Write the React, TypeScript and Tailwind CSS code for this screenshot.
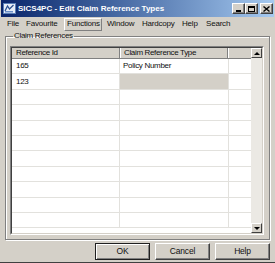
import React from 'react';

const font = { fontFamily: '"Liberation Sans", Arial, sans-serif' };

const menus = [
  { label: 'File', w: 'w-[19px]' },
  { label: 'Favourite', w: 'w-[41px]' },
  { label: 'Functions', w: 'w-[38px] mr-[2px]' },
  { label: 'Window', w: 'w-[35px]' },
  { label: 'Hardcopy', w: 'w-[40px]' },
  { label: 'Help', w: 'w-[24px]' },
  { label: 'Search', w: 'w-[40px]' },
];

const rows = [
  { id: '165', type: 'Policy Number', sel: false },
  { id: '123', type: '', sel: true },
  ...Array.from({ length: 9 }, () => ({ id: '', type: '', sel: false })),
];

function CaptionButton({ children }: { children: React.ReactNode }) {
  return (
    <div className="w-[13px] h-[11px] bg-[#d4d0c8] border border-t-white border-l-white border-r-[#404040] border-b-[#404040] shadow-[inset_-1px_-1px_0_#808080] flex items-center justify-center">
      {children}
    </div>
  );
}

function Btn({ label, def }: { label: string; def?: boolean }) {
  return (
    <div
      className={
        'w-[55px] h-[17px] flex items-center justify-center text-[8.5px] tracking-[-0.2px] text-[#111] bg-[#d4d0c8] border ' +
        (def
          ? 'border-[#202020] shadow-[inset_1px_1px_0_#fff,inset_-1px_-1px_0_#808080]'
          : 'border-t-white border-l-white border-r-[#404040] border-b-[#404040] shadow-[inset_-1px_-1px_0_#808080]')
      }
    >
      {label}
    </div>
  );
}

export default function App() {
  return (
    <div style={font} className="w-[275px] h-[263px] bg-[#d4d0c8] flex flex-col border-b border-b-[#404040] overflow-hidden select-none">
      {/* title bar */}
      <div className="h-[17px] mx-[1px] flex items-center bg-gradient-to-r from-[#0a246a] to-[#a6caf0]">
        <svg width="13" height="13" viewBox="0 0 13 13" className="ml-[2px]">
          <rect x="0.5" y="1.5" width="12" height="10" fill="#e8eef8" stroke="#5a7fb8" />
          <path d="M2 9 L4.5 4 L6.5 7 L10.5 3" stroke="#2b4f8f" strokeWidth="1.3" fill="none" />
          <rect x="2" y="9" width="8" height="1.5" fill="#6a8fc8" />
        </svg>
        <span className="ml-[2px] text-white font-bold text-[8px] leading-none whitespace-nowrap">
          SICS4PC - Edit Claim Reference Types
        </span>
        <div className="ml-auto flex items-center mr-[1px]">
          <CaptionButton>
            <div className="w-[5px] h-[2px] bg-black mt-[4px] mr-[1px]" />
          </CaptionButton>
          <CaptionButton>
            <div className="w-[7px] h-[6px] border border-black border-t-2" />
          </CaptionButton>
          <div className="w-[2px]" />
          <CaptionButton>
            <svg width="7" height="6" viewBox="0 0 7 6">
              <path d="M0.5 0.5 L6.5 5.5 M6.5 0.5 L0.5 5.5" stroke="#000" strokeWidth="1.4" />
            </svg>
          </CaptionButton>
        </div>
      </div>

      {/* menu bar */}
      <div className="h-[14px] flex items-center text-[8px] tracking-[-0.2px] text-[#111] pl-[4px]">
        {menus.map((m) => (
          <div
            key={m.label}
            className={
              'h-[13px] flex items-center pl-[2px] whitespace-nowrap border ' +
              m.w +
              ' ' +
              (m.label === 'Functions' ? 'border-t-white border-l-white border-r-[#808080] border-b-[#808080]' : 'border-transparent')
            }
          >
            {m.label}
          </div>
        ))}
      </div>

      {/* group box */}
      <fieldset className="mx-[5px] h-[209px] border border-[#808080] shadow-[1px_1px_0_#fff,inset_1px_1px_0_#fff] pl-[4px] pr-[5px] pb-[4px]">
        <legend className="ml-[3px] px-[1px] text-[8px] tracking-[-0.3px] leading-[10px] text-[#111]">Claim References</legend>
        <div className="mt-[5px] h-[189px] border border-t-[#808080] border-l-[#808080] border-r-white border-b-white">
          <div className="h-full border border-t-[#404040] border-l-[#404040] border-r-[#d4d0c8] border-b-[#d4d0c8] flex bg-white">
            <div className="flex-1 flex flex-col">
              {/* header */}
              <div className="h-[11px] flex text-[8px] tracking-[-0.35px] leading-[10px] text-[#111] bg-[#d4d0c8] border-b border-b-[#808080]">
                <div className="w-[108px] pl-[4px] border-r border-r-[#808080]">Reference Id</div>
                <div className="w-[108px] pl-[3px] border-l border-l-white border-r border-r-[#808080]">Claim Reference Type</div>
                <div className="flex-1 border-l border-l-white" />
              </div>
              {rows.map((r, i) => (
                <div key={i} className="h-[15.4px] flex text-[8px] tracking-[-0.3px] text-[#111] border-b border-b-[#e2e1dd]">
                  <div className="w-[108px] pl-[4px] flex items-center border-r border-r-[#e2e1dd]">{r.id}</div>
                  <div className={'w-[109px] pl-[3px] flex items-center border-r border-r-[#e2e1dd] ' + (r.sel ? 'bg-[#d4d0c8]' : '')}>{r.type}</div>
                  <div className="flex-1" />
                </div>
              ))}
            </div>
            {/* scrollbar */}
            <div className="w-[11px] flex flex-col bg-[#ebe9e4]">
              <div className="h-[10px] bg-[#d4d0c8] border border-t-white border-l-white border-r-[#404040] border-b-[#404040] flex items-center justify-center">
                <div className="w-0 h-0 border-l-[3px] border-r-[3px] border-b-[3px] border-l-transparent border-r-transparent border-b-black" />
              </div>
              <div className="flex-1" />
              <div className="h-[10px] bg-[#d4d0c8] border border-t-white border-l-white border-r-[#404040] border-b-[#404040] flex items-center justify-center">
                <div className="w-0 h-0 border-l-[3px] border-r-[3px] border-t-[3px] border-l-transparent border-r-transparent border-t-black" />
              </div>
            </div>
          </div>
        </div>
      </fieldset>

      {/* buttons */}
      <div className="flex justify-end gap-[5px] pr-[5px] mt-[3px]">
        <Btn label="OK" def />
        <Btn label="Cancel" />
        <Btn label="Help" />
      </div>
    </div>
  );
}
